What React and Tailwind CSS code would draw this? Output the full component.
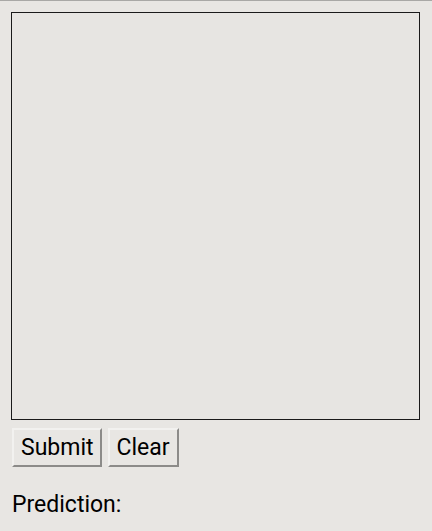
import React from 'react';

const App = () => {
    return (
        <div className="min-h-[531px] w-[432px] bg-[#e8e6e3] border-t border-t-[#a9a8a6] font-['Roboto',sans-serif] text-black">
            <div className="pl-[11px] pt-[11px]">
                <div className="w-[409px] h-[408px] border border-[#1a1a1a] bg-[#e7e5e2]" />

                <div className="mt-[8px] ml-px flex gap-[6px]">
                    <button className="h-[39px] pl-[7px] pr-[6px] text-[23px] leading-none bg-[#e8e6e3] border-2 border-t-[#f2f1ef] border-l-[#f2f1ef] border-b-[#8c8b89] border-r-[#8c8b89]">
                        Submit
                    </button>
                    <button className="h-[39px] px-[7px] text-[23px] leading-none bg-[#e8e6e3] border-2 border-t-[#f2f1ef] border-l-[#f2f1ef] border-b-[#8c8b89] border-r-[#8c8b89]">
                        Clear
                    </button>
                </div>

                <p className="mt-[25px] ml-px text-[23px] leading-[26px]">Prediction:</p>
            </div>
        </div>
    );
};

export default App;
